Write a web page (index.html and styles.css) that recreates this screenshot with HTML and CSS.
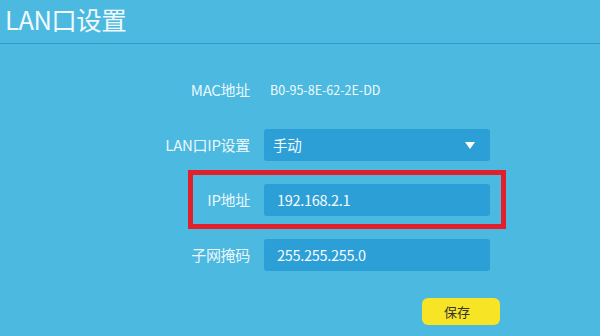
FILE: index.html
```html
<!DOCTYPE html>
<html lang="zh-CN">
<head>
<meta charset="utf-8">
<title>LAN口设置</title>
<link rel="stylesheet" href="styles.css">
</head>
<body>
<div class="page">
  <header class="head">
    <h1 class="title">LAN口设置</h1>
  </header>
  <div class="form">
    <div class="label">MAC地址</div>
    <div class="static">B0-95-8E-62-2E-DD</div>

    <div class="label">LAN口IP设置</div>
    <div class="field select">
      <span>手动</span>
      <svg class="arrow" width="10" height="7" viewBox="0 0 10 7"><path d="M0 0 H10 L5 7 Z" fill="#ffffff"/></svg>
    </div>

    <div class="label">IP地址</div>
    <div class="field">192.168.2.1</div>

    <div class="label">子网掩码</div>
    <div class="field">255.255.255.0</div>

    <div class="actions">
      <button class="save">保存</button>
    </div>
  </div>
  <div class="highlight"></div>
</div>
</body>
</html>
```

FILE: styles.css
```css
html, body {
  margin: 0;
  padding: 0;
}
body {
  width: 600px;
  height: 336px;
  overflow: hidden;
  background: #4bb9e0;
  font-family: "Noto Sans CJK SC", "Noto Sans", sans-serif;
  color: #eef8fd;
}
.page {
  position: relative;
  width: 600px;
  height: 336px;
}
.head {
  height: 43px;
  border-bottom: 1px solid #3698c6;
}
.title {
  margin: 0;
  padding: 2px 0 0 5px;
  font-size: 25.5px;
  font-weight: 400;
  line-height: 34px;
  color: #f2fafd;
  letter-spacing: -0.5px;
}
.form {
  display: grid;
  grid-template-columns: 250px 226px;
  grid-auto-rows: 32px;
  column-gap: 14px;
  row-gap: 23px;
  padding-top: 30px;
}
.label {
  text-align: right;
  font-size: 15px;
  line-height: 32px;
  color: #eaf7fc;
  letter-spacing: -0.3px;
}
.static {
  padding-left: 6px;
  font-size: 12.5px;
  line-height: 32px;
  color: #f2fafd;
}
.field {
  background: #2c9fd7;
  border-radius: 3px;
  padding-left: 13px;
  font-size: 14.5px;
  line-height: 32px;
  color: #f4fbfe;
  letter-spacing: -0.3px;
}
.select {
  display: flex;
  align-items: center;
  justify-content: space-between;
  padding-left: 9px;
  padding-right: 15px;
}
.arrow {
  display: block;
}
.actions {
  grid-column: 2;
  display: flex;
  justify-content: flex-end;
  margin-right: -10px;
  margin-top: 4px;
}
.save {
  width: 78px;
  height: 27px;
  border: none;
  border-radius: 6px;
  background: #f7e424;
  color: #333333;
  font-family: "Noto Sans CJK SC", sans-serif;
  font-size: 13px;
  padding: 0 8px 0 0;
  line-height: 27px;
}
.highlight {
  position: absolute;
  left: 188px;
  top: 170px;
  width: 308px;
  height: 49px;
  border: 5px solid #e2202b;
}
```
